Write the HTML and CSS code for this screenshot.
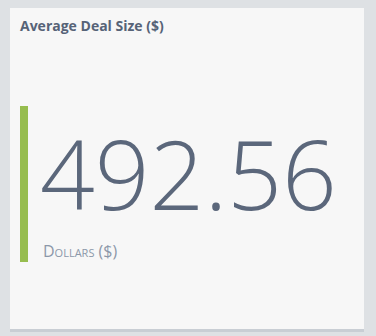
FILE: index.html
```html
<!DOCTYPE html>
<html lang="en">
<head>
    <meta charset="UTF-8">
    <meta name="viewport" content="width=device-width, initial-scale=1.0">
    <title>Average Deal Size</title>
    <link rel="stylesheet" href="styles.css">
</head>
<body>
    <div class="tile">
        <div class="tile-title">Average Deal Size ($)</div>
        <div class="metric">
            <div class="metric-bar"></div>
            <div class="metric-body">
                <div class="metric-value">492.56</div>
                <div class="metric-unit">Dollars ($)</div>
            </div>
        </div>
    </div>
</body>
</html>
```

FILE: styles.css
```css
body {
    background-color: #dee1e4;
    font-family: "Open Sans", sans-serif;
    margin: 0;
    padding: 8px 12px 4px 10px;
}
.tile {
    height: 311px;
    background-color: #f7f7f7;
    border-bottom: 3px solid #c9ced4;
    padding: 10px 10px 0 10px;
}
.tile-title {
    font-size: 14px;
    font-weight: 700;
    color: #566377;
    line-height: 16px;
}
.metric {
    display: flex;
    margin-top: 72px;
    height: 156px;
}
.metric-bar {
    width: 8px;
    background-color: #97bd4f;
}
.metric-body {
    padding-left: 15px;
    padding-bottom: 1px;
    display: flex;
    flex-direction: column;
    justify-content: flex-end;
}
.metric-value {
    font-size: 96px;
    font-weight: 300;
    color: #5b677b;
    line-height: 96px;
    margin-left: -3px;
}
.metric-unit {
    font-size: 16px;
    font-variant: small-caps;
    color: #8c97a9;
    line-height: 20px;
    margin-top: 20px;
}
```
